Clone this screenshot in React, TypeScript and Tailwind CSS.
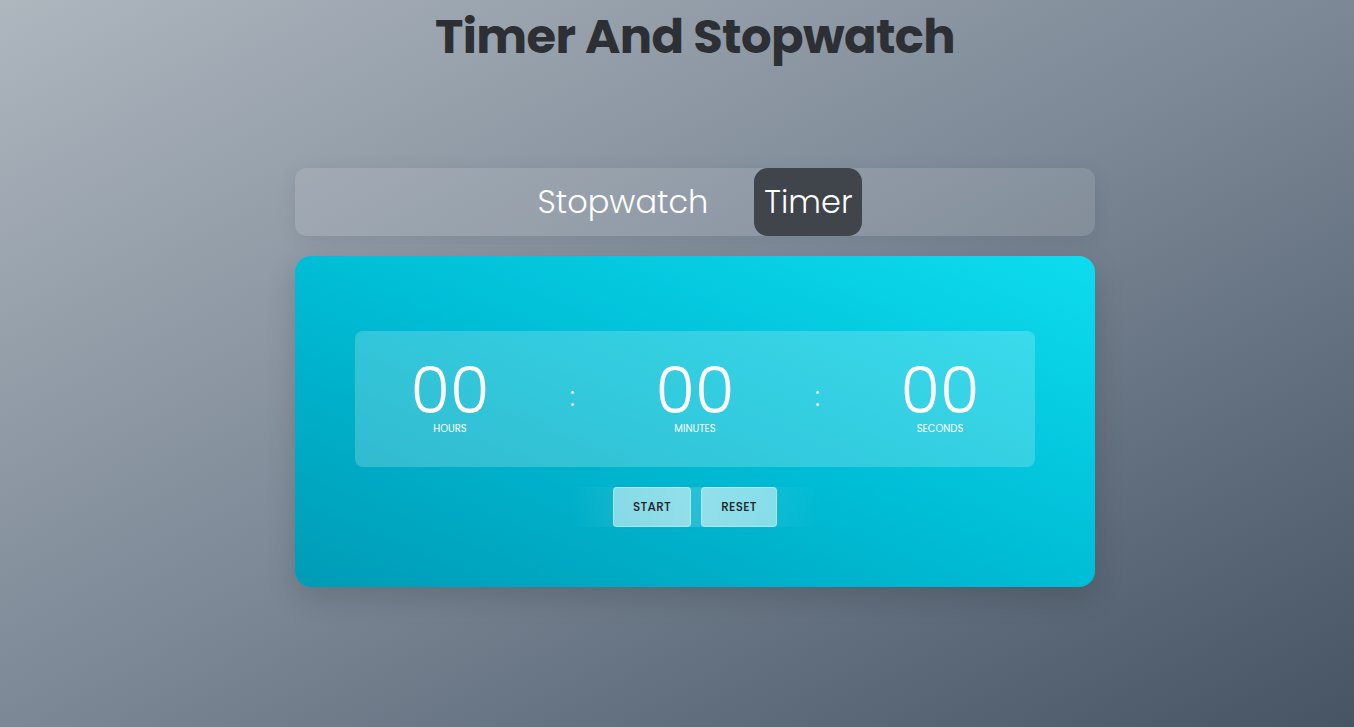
import React from "react";

export default function App() {
  const units = [
    { v: "00", l: "HOURS" },
    { v: "00", l: "MINUTES" },
    { v: "00", l: "SECONDS" },
  ];
  return (
    <div
      className="min-h-screen w-full bg-gradient-to-br from-[#aeb6be] via-[#7c8896] to-[#465464] flex flex-col items-center pl-[36px]"
      style={{ fontFamily: "Poppins, Inter, 'Noto Sans', sans-serif" }}
    >
      <h1 className="mt-[6px] text-[48px] leading-[62px] font-bold text-[#2c2f33] tracking-[-0.6px]">
        Timer And Stopwatch
      </h1>

      <div className="mt-[100px] w-[800px] h-[68px] rounded-[12px] bg-white/10 shadow-[0_4px_20px_rgba(0,0,0,0.08)] flex items-center justify-center">
        <div className="flex items-center gap-[46px] ml-[10px]">
          <button className="text-[32px] font-light text-white leading-none">Stopwatch</button>
          <button className="h-[68px] px-[10px] rounded-[14px] bg-[#40454c] text-[32px] font-light text-white leading-none">
            Timer
          </button>
        </div>
      </div>

      <div className="mt-[20px] w-[800px] h-[331px] rounded-[16px] bg-gradient-to-tr from-[#009bb6] via-[#00bdd6] to-[#0edcef] shadow-[0_10px_30px_rgba(0,0,0,0.15)] flex flex-col items-center pt-[75px]">
        <div className="w-[680px] h-[136px] rounded-[8px] bg-white/20 flex items-center justify-center">
          <div className="grid grid-cols-[repeat(5,122.5px)] items-center mt-[-2px]">
            {units.map((u, i) => (
              <React.Fragment key={u.l}>
                <div className="flex flex-col items-center">
                  <span className="text-[64px] font-light text-white leading-[58px]">{u.v}</span>
                  <span className="text-[10px] font-normal text-white leading-[12px] mt-[3px]">{u.l}</span>
                </div>
                {i < 2 && (
                  <div className="flex justify-center text-white text-[26px] font-light leading-none mt-[-2px]">:</div>
                )}
              </React.Fragment>
            ))}
          </div>
        </div>
        <div className="mt-[20px] w-[250px] h-[40px] flex items-center justify-center gap-[10px] bg-gradient-to-r from-transparent via-white/15 to-transparent">
          <button className="w-[78px] h-[40px] rounded-[4px] bg-white/50 border border-white/30 text-[12px] font-medium text-[#1b2327] tracking-[0.3px]">
            START
          </button>
          <button className="w-[76px] h-[40px] rounded-[4px] bg-white/50 border border-white/30 text-[12px] font-medium text-[#1b2327] tracking-[0.3px]">
            RESET
          </button>
        </div>
      </div>
    </div>
  );
}
